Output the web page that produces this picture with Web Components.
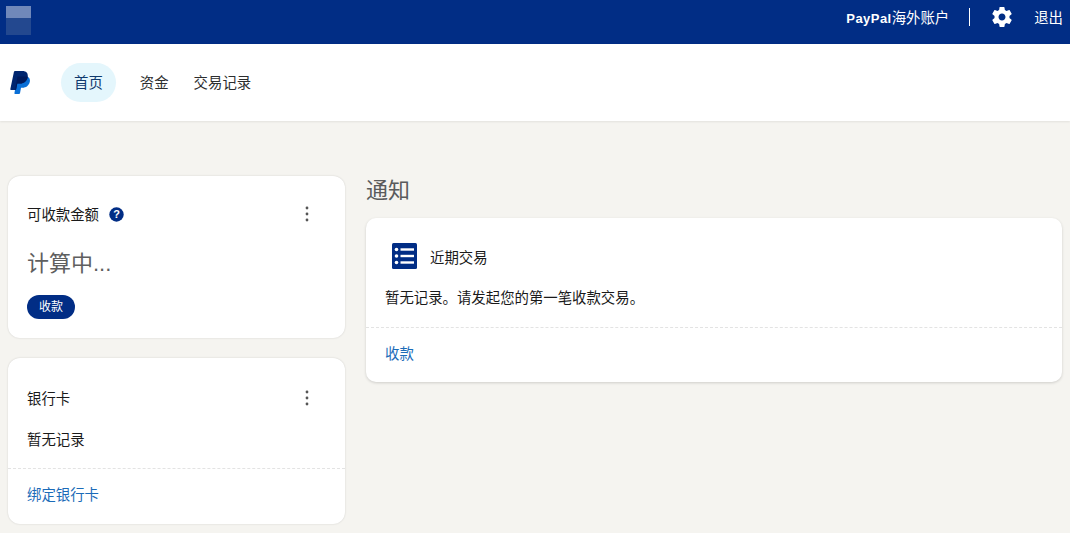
<!DOCTYPE html>
<html lang="zh">
<head>
<meta charset="utf-8">
<title>PayPal</title>
<style>
  html, body { margin: 0; height: 100%; }
  body {
    background: #f5f4f0;
    color: #1a1a1a;
    font-family: "Liberation Sans", "Noto Sans CJK SC", sans-serif;
    font-size: 14.4px;
    overflow: hidden;
  }
</style>
</head>
<body>
<top-bar></top-bar>
<main-nav></main-nav>
<home-page>
  <info-card slot="left" heading="可收款金额" help menu>
    <div style="font-size:22px;line-height:32px;color:#5f5f5f;margin-top:24px">计算中...</div>
    <pill-button style="margin-top:15px">收款</pill-button>
  </info-card>
  <info-card slot="left" heading="银行卡" menu footer="绑定银行卡" style="margin-top:20px;--head-top:30px;--body-bottom:18px">
    <div style="line-height:20px;margin-top:22px;color:#1a1a1a">暂无记录</div>
  </info-card>
  <recent-card slot="right"></recent-card>
</home-page>

<script>
"use strict";

class TopBar extends HTMLElement {
  constructor() {
    super();
    this.attachShadow({ mode: "open" });
    this.shadowRoot.innerHTML = `
      <style>
        :host {
          display: flex;
          align-items: center;
          height: 44px;
          box-sizing: border-box;
          padding: 0 7px 11px 6px;
          background: #012d85;
          color: #fff;
          font-size: 14.4px;
        }
        .logo {
          width: 25px;
          height: 29px;
          margin-top: 8px;
          filter: blur(.6px);
          background: linear-gradient(#7088ba 0 12px, #23488f 12px 100%);
        }
        .account { margin-left: auto; display: flex; align-items: baseline; }
        .account b { font-size: 13px; letter-spacing: .45px; }
        .sep { width: 1px; height: 18px; background: #fff; margin: 0 20px; }
        svg { display: block; margin-right: 20px; }
      </style>
      <div class="logo"></div>
      <div class="account"><b>PayPal</b><span>海外账户</span></div>
      <div class="sep"></div>
      <svg width="24" height="24" viewBox="0 0 24 24" fill="#fff">
        <path d="M19.43 12.98c.04-.32.07-.64.07-.98s-.03-.66-.07-.98l2.11-1.65c.19-.15.24-.42.12-.64l-2-3.46c-.12-.22-.39-.3-.61-.22l-2.49 1c-.52-.4-1.08-.73-1.69-.98l-.38-2.65A.49.49 0 0 0 14 2h-4c-.25 0-.46.18-.49.42l-.38 2.65c-.61.25-1.17.59-1.69.98l-2.49-1c-.23-.09-.49 0-.61.22l-2 3.46c-.13.22-.07.49.12.64l2.11 1.65c-.04.32-.07.65-.07.98s.03.66.07.98l-2.11 1.65c-.19.15-.24.42-.12.64l2 3.46c.12.22.39.3.61.22l2.49-1c.52.4 1.08.73 1.69.98l.38 2.65c.03.24.24.42.49.42h4c.25 0 .46-.18.49-.42l.38-2.65c.61-.25 1.17-.59 1.69-.98l2.49 1c.23.09.49 0 .61-.22l2-3.46c.12-.22.07-.49-.12-.64l-2.11-1.65zM12 15.5c-1.93 0-3.5-1.57-3.5-3.5s1.57-3.5 3.5-3.5 3.5 1.57 3.5 3.5-1.57 3.5-3.5 3.5z"/>
      </svg>
      <span>退出</span>
    `;
  }
}

class MainNav extends HTMLElement {
  constructor() {
    super();
    this.attachShadow({ mode: "open" });
    this.shadowRoot.innerHTML = `
      <style>
        :host {
          display: flex;
          align-items: center;
          height: 77px;
          background: #fff;
          box-shadow: 0 1px 2px rgba(0,0,0,.08);
          padding-left: 10px;
          position: relative;
        }
        svg { display: block; margin-right: 31px; margin-top: 1px; }
        a {
          display: block;
          height: 39px;
          line-height: 41px;
          color: #2c2e2f;
          margin-right: 25px;
        }
        a.on {
          background: #e4f6fc;
          color: #103a6e;
          padding: 0 13px;
          border-radius: 20px;
          margin-right: 24px;
        }
      </style>
      <svg width="20" height="24" viewBox="0 0 20 24">
        <path fill="#0a6fd6" d="M7.500 5.500h8.300c2.800 0 4.700 2 4 5.300-.8 3.900-3.800 6-7.400 6h-1.400l-1 5.400c-.1.500-.5.800-1 .8H5c-.4 0-.7-.4-.6-.8z"/>
        <path fill="#00256f" d="M5 0h7.500c3.500 0 5.900 2 5.200 6-.7 4-3.600 6.500-7.500 6.500H7.300L6.100 18.600c-.1.300-.3.500-.6.500H1c-.5 0-.8-.4-.7-.8L3.900.9C4 .4 4.500 0 5 0z"/>
        <path fill="#001a5c" d="M7.500 5.500h10.300c-.1.200-.1.300-.1.500-.7 4-3.600 6.500-7.500 6.500H7.300l-1.200 6.100c-.1.300-.3.500-.6.500h-.4z"/>
      </svg>
      <a class="on">首页</a>
      <a>资金</a>
      <a>交易记录</a>
    `;
  }
}

class HomePage extends HTMLElement {
  constructor() {
    super();
    this.attachShadow({ mode: "open" });
    this.shadowRoot.innerHTML = `
      <style>
        :host {
          display: grid;
          grid-template-columns: 337px 696px;
          column-gap: 21px;
          padding: 55px 8px 0;
          align-items: start;
        }
        h2 {
          margin: 0;
          height: 42px;
          font-size: 22px;
          line-height: 30px;
          font-weight: 400;
          color: #595b5c;
        }
      </style>
      <div><slot name="left"></slot></div>
      <div>
        <h2>通知</h2>
        <slot name="right"></slot>
      </div>
    `;
  }
}

class InfoCard extends HTMLElement {
  constructor() {
    super();
    this.attachShadow({ mode: "open" });
    const foot = this.getAttribute("footer");
    const help = this.hasAttribute("help") ? `
      <svg class="help" width="15" height="15" viewBox="0 0 15 15">
        <circle cx="7.500" cy="7.500" r="7.200" fill="#012d85"/>
        <text x="7.500" y="11.300" text-anchor="middle" font-size="11" font-weight="700" fill="#fff" font-family="Liberation Sans">?</text>
      </svg>` : "";
    this.shadowRoot.innerHTML = `
      <style>
        :host {
          display: block;
          background: #fff;
          border-radius: 12px;
          box-shadow: 0 0 2px rgba(0,0,0,.16);
        }
        .body { padding: var(--head-top, 28px) 19px var(--body-bottom, 19px); }
        .head { display: flex; align-items: center; height: 20px; line-height: 20px; }
        .head span { padding-top: 2px; }
        .help { margin-left: 10px; }
        .dots { margin-left: auto; margin-right: 17px; display: block; }
        .foot {
          border-top: 1px dashed #e3e3e3;
          padding: 16px 19px 19px;
          line-height: 20px;
          color: #1b6bb8;
        }
      </style>
      <div class="body">
        <div class="head">
          <span>${this.getAttribute("heading")}</span>${help}
          <svg class="dots" width="4" height="16" viewBox="0 0 4 16" fill="#555">
            <circle cx="2" cy="2" r="1.400"/><circle cx="2" cy="8" r="1.400"/><circle cx="2" cy="14" r="1.400"/>
          </svg>
        </div>
        <slot></slot>
      </div>
      ${foot ? `<div class="foot">${foot}</div>` : ""}
    `;
  }
}

class PillButton extends HTMLElement {
  constructor() {
    super();
    this.attachShadow({ mode: "open" });
    this.shadowRoot.innerHTML = `
      <style>
        :host {
          display: block;
          width: 48px;
          height: 24px;
          line-height: 24px;
          text-align: center;
          background: #012d85;
          color: #fff;
          font-size: 12px;
          border-radius: 12px;
        }
      </style>
      <slot></slot>
    `;
  }
}

class RecentCard extends HTMLElement {
  constructor() {
    super();
    this.attachShadow({ mode: "open" });
    this.shadowRoot.innerHTML = `
      <style>
        :host {
          display: block;
          background: #fff;
          border-radius: 10px;
          box-shadow: 0 1px 3px rgba(0,0,0,.16);
        }
        .head { display: flex; align-items: center; padding: 25px 0 0 26px; }
        svg { display: block; margin-right: 13px; }
        p { margin: 0; padding: 19px 19px 19px; line-height: 20px; color: #1a1a1a; }
        .foot {
          border-top: 1px dashed #e3e3e3;
          padding: 16px 19px 18px;
          line-height: 20px;
          color: #1b6bb8;
        }
      </style>
      <div class="head">
        <svg width="25" height="26" viewBox="0 0 25 26">
          <rect width="25" height="26" rx="1.500" fill="#012d85"/>
          <g fill="#fff">
            <circle cx="4.500" cy="6.500" r="1.800"/><circle cx="4.500" cy="13" r="1.800"/><circle cx="4.500" cy="19.500" r="1.800"/>
            <rect x="8.500" y="5.300" width="13.500" height="2.400"/><rect x="8.500" y="11.800" width="13.500" height="2.400"/><rect x="8.500" y="18.300" width="13.500" height="2.400"/>
          </g>
        </svg>
        <span>近期交易</span>
      </div>
      <p>暂无记录。请发起您的第一笔收款交易。</p>
      <div class="foot">收款</div>
    `;
  }
}

customElements.define("top-bar", TopBar);
customElements.define("main-nav", MainNav);
customElements.define("home-page", HomePage);
customElements.define("info-card", InfoCard);
customElements.define("pill-button", PillButton);
customElements.define("recent-card", RecentCard);
</script>
</body>
</html>
